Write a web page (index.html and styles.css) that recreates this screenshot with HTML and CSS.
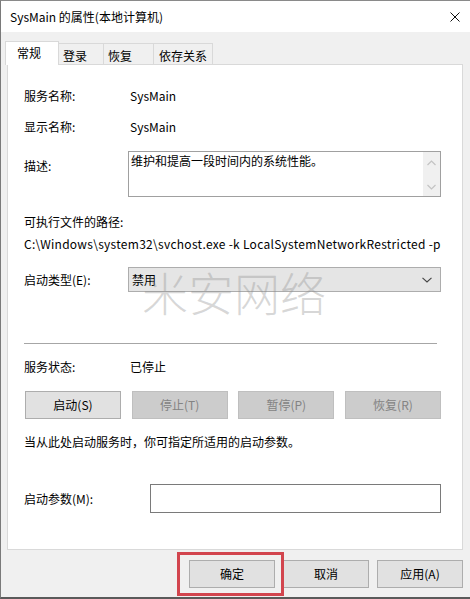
FILE: index.html
```html
<!DOCTYPE html>
<html lang="zh-CN">
<head>
<meta charset="utf-8">
<title>SysMain 的属性(本地计算机)</title>
<link rel="stylesheet" href="styles.css">
</head>
<body>
<div class="window">
  <div class="titlebar">
    <span class="title">SysMain 的属性(本地计算机)</span>
    <svg class="close" width="10" height="10" viewBox="0 0 10 10"><path d="M0.5 0.5 L9.5 9.5 M9.5 0.5 L0.5 9.5" stroke="#111" stroke-width="1" fill="none"/></svg>
  </div>
  <div class="client">
    <div class="tabs">
      <div class="tab active">常规</div>
      <div class="tab t-login">登录</div>
      <div class="tab t-recover">恢复</div>
      <div class="tab t-deps">依存关系</div>
    </div>
    <div class="panel">
      <div class="row r-name"><span class="label">服务名称:</span><span class="value">SysMain</span></div>
      <div class="row r-display"><span class="label">显示名称:</span><span class="value">SysMain</span></div>
      <div class="row r-desc">
        <span class="label desc-label">描述:</span>
        <div class="textbox">
          <div class="textbox-text">维护和提高一段时间内的系统性能。</div>
          <div class="scrollbar">
            <svg width="9" height="6" viewBox="0 0 9 6"><path d="M0.5 5 L4.5 1 L8.5 5" stroke="#c3c3c3" stroke-width="1.2" fill="none"/></svg>
            <svg width="9" height="6" viewBox="0 0 9 6"><path d="M0.5 1 L4.5 5 L8.5 1" stroke="#c3c3c3" stroke-width="1.2" fill="none"/></svg>
          </div>
        </div>
      </div>
      <div class="row r-pathlabel"><span class="label wide">可执行文件的路径:</span></div>
      <div class="row r-path"><span class="path">C:\Windows\system32\svchost.exe -k LocalSystemNetworkRestricted -p</span></div>
      <div class="row r-type">
        <span class="label">启动类型(E):</span>
        <div class="select">
          <span class="select-text">禁用</span>
          <svg width="10" height="6" viewBox="0 0 10 6"><path d="M0.5 0.8 L5 5 L9.5 0.8" stroke="#444" stroke-width="1.1" fill="none"/></svg>
        </div>
      </div>
      <div class="separator"></div>
      <div class="row r-status"><span class="label">服务状态:</span><span class="value">已停止</span></div>
      <div class="btn-row">
        <div class="btn">启动(S)</div>
        <div class="btn disabled">停止(T)</div>
        <div class="btn disabled">暂停(P)</div>
        <div class="btn disabled">恢复(R)</div>
      </div>
      <div class="row r-hint"><span class="hint">当从此处启动服务时，你可指定所适用的启动参数。</span></div>
      <div class="row r-params">
        <span class="label params-label">启动参数(M):</span>
        <div class="input"></div>
      </div>
    </div>
    <div class="footer">
      <div class="btn fbtn">确定</div>
      <div class="btn fbtn">取消</div>
      <div class="btn fbtn">应用(A)</div>
    </div>
  </div>
  <div class="watermark">米安网络</div>
  <div class="highlight"></div>
</div>
</body>
</html>
```
FILE: styles.css
```css
* { box-sizing: border-box; }
html, body { margin: 0; padding: 0; }
body {
  width: 470px;
  height: 599px;
  overflow: hidden;
  background: #f0f0f0;
  font-family: "Noto Sans CJK SC", "Noto Sans", sans-serif;
  font-size: 12px;
  line-height: 16px;
  color: #000;
}
.window {
  position: relative;
  height: 599px;
  border-left: 1px solid #7a7a7a;
  border-top: 1px solid #8a8a8a;
  border-bottom: 2px solid #5a5a5a;
  background: #f0f0f0;
}
.titlebar {
  height: 31px;
  background: #fff;
  display: flex;
  align-items: center;
  justify-content: space-between;
  padding: 0 10px 0 9px;
}
.title { color: #000; }
.close { display: block; }
.client { padding: 9px 7px 0 6px; }
.tabs {
  display: flex;
  align-items: flex-end;
  height: 23px;
  margin-left: -2px;
  position: relative;
  z-index: 1;
}
.tab {
  height: 21px;
  line-height: 23px;
  background: #f0f0f0;
  border-top: 1px solid #d9d9d9;
  border-right: 1px solid #d9d9d9;
  padding-left: 4px;
  color: #000;
}
.tab.active {
  width: 54px;
  height: 24px;
  margin-bottom: -1px;
  background: #fff;
  border: 1px solid #d9d9d9;
  border-bottom: none;
  padding-left: 11px;
  line-height: 21px;
}
.t-login { width: 45px; }
.t-recover { width: 50px; }
.t-deps { width: 59px; padding-left: 5px; }
.panel {
  background: #fff;
  border: 1px solid #d9d9d9;
  height: 486px;
  padding: 23px 21px 0 16px;
}
.row { display: flex; align-items: center; }
.label { width: 104px; flex: none; }
.value { padding-left: 2px; }
.r-name { height: 16px; }
.r-display { height: 16px; margin-top: 15px; }
.r-desc { align-items: flex-start; margin-top: 16px; }
.desc-label { margin-top: 7px; }
.textbox {
  flex: 1;
  height: 46px;
  border: 1px solid #a0a0a0;
  display: flex;
  background: #fff;
}
.textbox-text { flex: 1; padding: 1px 0 0 2px; }
.scrollbar {
  width: 17px;
  background: #f0f0f0;
  display: flex;
  flex-direction: column;
  align-items: center;
  justify-content: space-between;
  padding: 8px 0 6px;
}
.scrollbar svg { display: block; }
.r-pathlabel { height: 16px; margin-top: 17px; }
.wide { width: auto; }
.r-path { height: 16px; margin-top: 6px; }
.path { white-space: nowrap; letter-spacing: 0.28px; }
.r-type { margin-top: 15px; }
.select {
  flex: 1;
  height: 25px;
  border: 1px solid #adadad;
  background: #e5e5e5;
  display: flex;
  align-items: center;
  justify-content: space-between;
  padding: 0 8px 0 3px;
}
.select svg { display: block; }
.separator {
  height: 1px;
  background: #a6a6a6;
  margin: 51px 4px 0 0;
}
.r-status { height: 16px; margin-top: 15px; }
.btn-row {
  display: flex;
  justify-content: space-between;
  margin: 16px 0 0 1px;
}
.btn {
  width: 96px;
  height: 28px;
  border: 1px solid #adadad;
  background: #e1e1e1;
  display: flex;
  align-items: center;
  justify-content: center;
  color: #000;
}
.btn.disabled {
  background: #cccccc;
  border-color: #bfbfbf;
  color: #838383;
}
.r-hint { height: 16px; margin-top: 15px; }
.r-params { margin-top: 34px; }
.params-label { width: 126px; }
.input {
  flex: 1;
  height: 29px;
  border: 1px solid #7a7a7a;
  background: #fff;
}
.footer {
  display: flex;
  justify-content: flex-end;
  gap: 8px;
  margin-top: 10px;
}
.fbtn { width: 86px; }
.watermark {
  position: absolute;
  left: 141px;
  top: 266px;
  font-size: 46px;
  line-height: 48px;
  font-weight: 300;
  color: rgba(140, 140, 140, 0.35);
  letter-spacing: 0;
  pointer-events: none;
}
.highlight {
  position: absolute;
  left: 176px;
  top: 551px;
  width: 107px;
  height: 44px;
  border: 3px solid #d2454e;
  pointer-events: none;
}
```
